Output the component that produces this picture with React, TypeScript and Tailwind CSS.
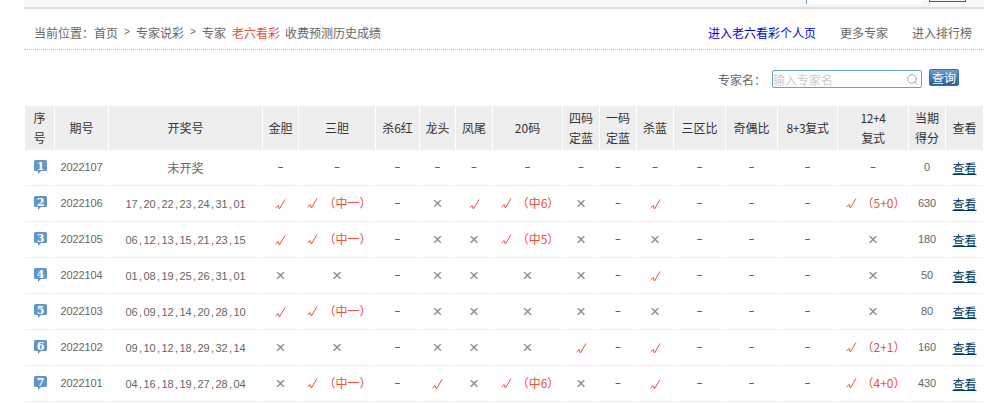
import { Search } from "lucide-react"

const colWidths = ["w-[29px]", "w-[53px]", "w-[153px]", "w-[35px]", "w-[76px]", "w-[43px]", "w-[35px]", "w-[36px]", "w-[69px]", "w-[36px]", "w-[36px]", "w-[36px]", "w-[51px]", "w-[51px]", "w-[59px]", "w-[70px]", "w-[36px]", "w-[37px]"]

const headers = ["序\n号", "期号", "开奖号", "金胆", "三胆", "杀6红", "龙头", "凤尾", "20码", "四码\n定蓝", "一码\n定蓝", "杀蓝", "三区比", "奇偶比", "8+3复式", "12+4\n复式", "当期\n得分", "查看"]

const rows = [
  { no: "2022107", nums: "未开奖", cells: ["-", "-", "-", "-", "-", "-", "-", "-", "-", "-", "-", "-", "-"], score: "0" },
  { no: "2022106", nums: "17,20,22,23,24,31,01", cells: ["y", "y（中一）", "-", "x", "y", "y（中6）", "x", "-", "y", "-", "-", "-", "y（5+0）"], score: "630" },
  { no: "2022105", nums: "06,12,13,15,21,23,15", cells: ["y", "y（中一）", "-", "x", "x", "y（中5）", "x", "-", "x", "-", "-", "-", "x"], score: "180" },
  { no: "2022104", nums: "01,08,19,25,26,31,01", cells: ["x", "x", "-", "x", "x", "x", "x", "-", "y", "-", "-", "-", "x"], score: "50" },
  { no: "2022103", nums: "06,09,12,14,20,28,10", cells: ["y", "y（中一）", "-", "x", "x", "x", "x", "-", "x", "-", "-", "-", "x"], score: "80" },
  { no: "2022102", nums: "09,10,12,18,29,32,14", cells: ["x", "x", "-", "x", "x", "x", "y", "-", "y", "-", "-", "-", "y（2+1）"], score: "160" },
  { no: "2022101", nums: "04,16,18,19,27,28,04", cells: ["x", "y（中一）", "-", "y", "x", "y（中6）", "x", "-", "y", "-", "-", "-", "y（4+0）"], score: "430" },
]

const digits = "font-['Liberation_Sans',sans-serif] text-[11px] tracking-[-0.12px]"

function Rank({ n }: { n: number }) {
  return (
    <svg width="13" height="14" viewBox="0 0 13 14" className="block ml-[9px] -mt-[2px]">
      <rect x="0" y="0" width="13" height="11" rx="1.5" fill="#5f97cc" />
      <polygon points="4,11 7,11 4,14" fill="#5f97cc" />
      <text x="6.5" y="9.5" textAnchor="middle" fontSize="11" fontWeight="700" fontFamily="DejaVu Serif, serif" fill="#fff">{n}</text>
    </svg>
  )
}

function Check() {
  return (
    <svg width="11" height="11" viewBox="0 0 11 11" className="inline-block align-[-1px]">
      <polyline points="0.5,9 3.2,6.5 4.4,10 10,0.5" fill="none" stroke="#e8513d" strokeWidth="1" />
    </svg>
  )
}

function Result({ value }: { value: string }) {
  if (value === "-") return <span className="font-['DejaVu_Sans',sans-serif] text-[#555] relative -top-px">–</span>
  if (value === "x") return <span className="font-['Liberation_Sans',sans-serif] text-[17px] leading-none text-[#888]">×</span>
  if (value === "y") return <Check />
  return (
    <span className="inline-flex items-center justify-center text-[#e8513d] whitespace-nowrap">
      <Check />
      <span className="ml-[5px] -mr-[5px]">{value.slice(1)}</span>
    </span>
  )
}

function Nums({ value }: { value: string }) {
  const parts = value.split(",")
  return (
    <span className={digits}>
      {parts.map((p, i) => (
        <span key={i}>
          {p}
          {i < parts.length - 1 && <span className="inline-block w-[6px] text-center">,</span>}
        </span>
      ))}
    </span>
  )
}

export default function App() {
  return (
    <div className="ml-[24px] w-[960px] bg-white font-['Noto_Sans_CJK_SC','Liberation_Sans',sans-serif] text-xs text-[#666]">
      {/* top strip, cut off by the window */}
      <div className="h-[9px] bg-[#f7f7f7] border-b-2 border-[#ddd] flex justify-end items-start overflow-hidden">
        <div className="w-[116px] h-[4px] bg-white border-l border-[#6a9fc8]"></div>
        <div className="ml-[7px] mr-[18px] w-[37px] h-[2px] border-b border-x border-[#2f5f94]"></div>
      </div>

      {/* breadcrumb */}
      <div className="h-[41px] border-b border-dotted border-[#bbb] flex justify-between items-center pl-[10px] pr-[12px] pt-[8px]">
        <div className="flex items-center">
          <span>当前位置：首页</span>
          <span className="mx-[6px] w-[6px] text-center font-['Liberation_Mono',monospace] text-[10px]">&gt;</span>
          <span>专家说彩</span>
          <span className="mx-[6px] w-[6px] text-center font-['Liberation_Mono',monospace] text-[10px]">&gt;</span>
          <span>专家</span>
          <span className="ml-[6px] text-[#e8513d]">老六看彩</span>
          <span className="ml-[5px]">收费预测历史成绩</span>
        </div>
        <div className="flex items-center gap-[24px]">
          <a href="#" className="text-[#0000ee]">进入老六看彩个人页</a>
          <a href="#">更多专家</a>
          <a href="#">进入排行榜</a>
        </div>
      </div>

      {/* search */}
      <div className="h-[56px] flex justify-end items-start pt-[20px] pr-[25px]">
        <span className="mt-[2px] mr-[7px]">专家名：</span>
        <div className="relative">
          <input placeholder="输入专家名" className="block w-[150px] h-[18px] ml-[-1px] border border-[#6a9fc8] rounded-[2px] text-xs placeholder:text-[#ccc] outline-none" />
          <Search size={13} strokeWidth={1.5} className="absolute right-[3px] top-[3px] text-[#6a9fc8]" />
        </div>
        <button className="ml-[7px] -mt-[1px] w-[30px] h-[17px] rounded-[2px] border border-[#3a6ea5] bg-gradient-to-b from-[#6c9fd4] to-[#2a5a98] text-white text-xs leading-none">查询</button>
      </div>

      <table className="table-fixed border-separate border-spacing-x-px border-spacing-y-0 w-[960px] text-center">
        <colgroup>
          {colWidths.map((w, i) => <col key={i} className={w} />)}
        </colgroup>
        <thead>
          <tr>
            {headers.map((h, i) => (
              <th key={i} className={`h-[44px] p-0 bg-[#eee] font-normal text-[#333] leading-[20px] whitespace-pre-line ${i === 14 || i === 15 ? "tracking-[-0.4px]" : ""}`}>{h}</th>
            ))}
          </tr>
        </thead>
        <tbody>
          {rows.map((r, i) => (
            <tr key={r.no}>
              <td className="h-[36px] p-0 border-b border-[#eee]"><Rank n={i + 1} /></td>
              <td className={`p-0 border-b border-[#eee] ${digits}`}>{r.no}</td>
              <td className="p-0 border-b border-[#eee]">{i === 0 ? r.nums : <Nums value={r.nums} />}</td>
              {r.cells.map((c, j) => (
                <td key={j} className="p-0 border-b border-[#eee]"><Result value={c} /></td>
              ))}
              <td className={`p-0 border-b border-[#eee] ${digits}`}>{r.score}</td>
              <td className="p-0 border-b border-[#eee]"><a href="#" className="text-[#003a5e] underline">查看</a></td>
            </tr>
          ))}
        </tbody>
      </table>
    </div>
  )
}
